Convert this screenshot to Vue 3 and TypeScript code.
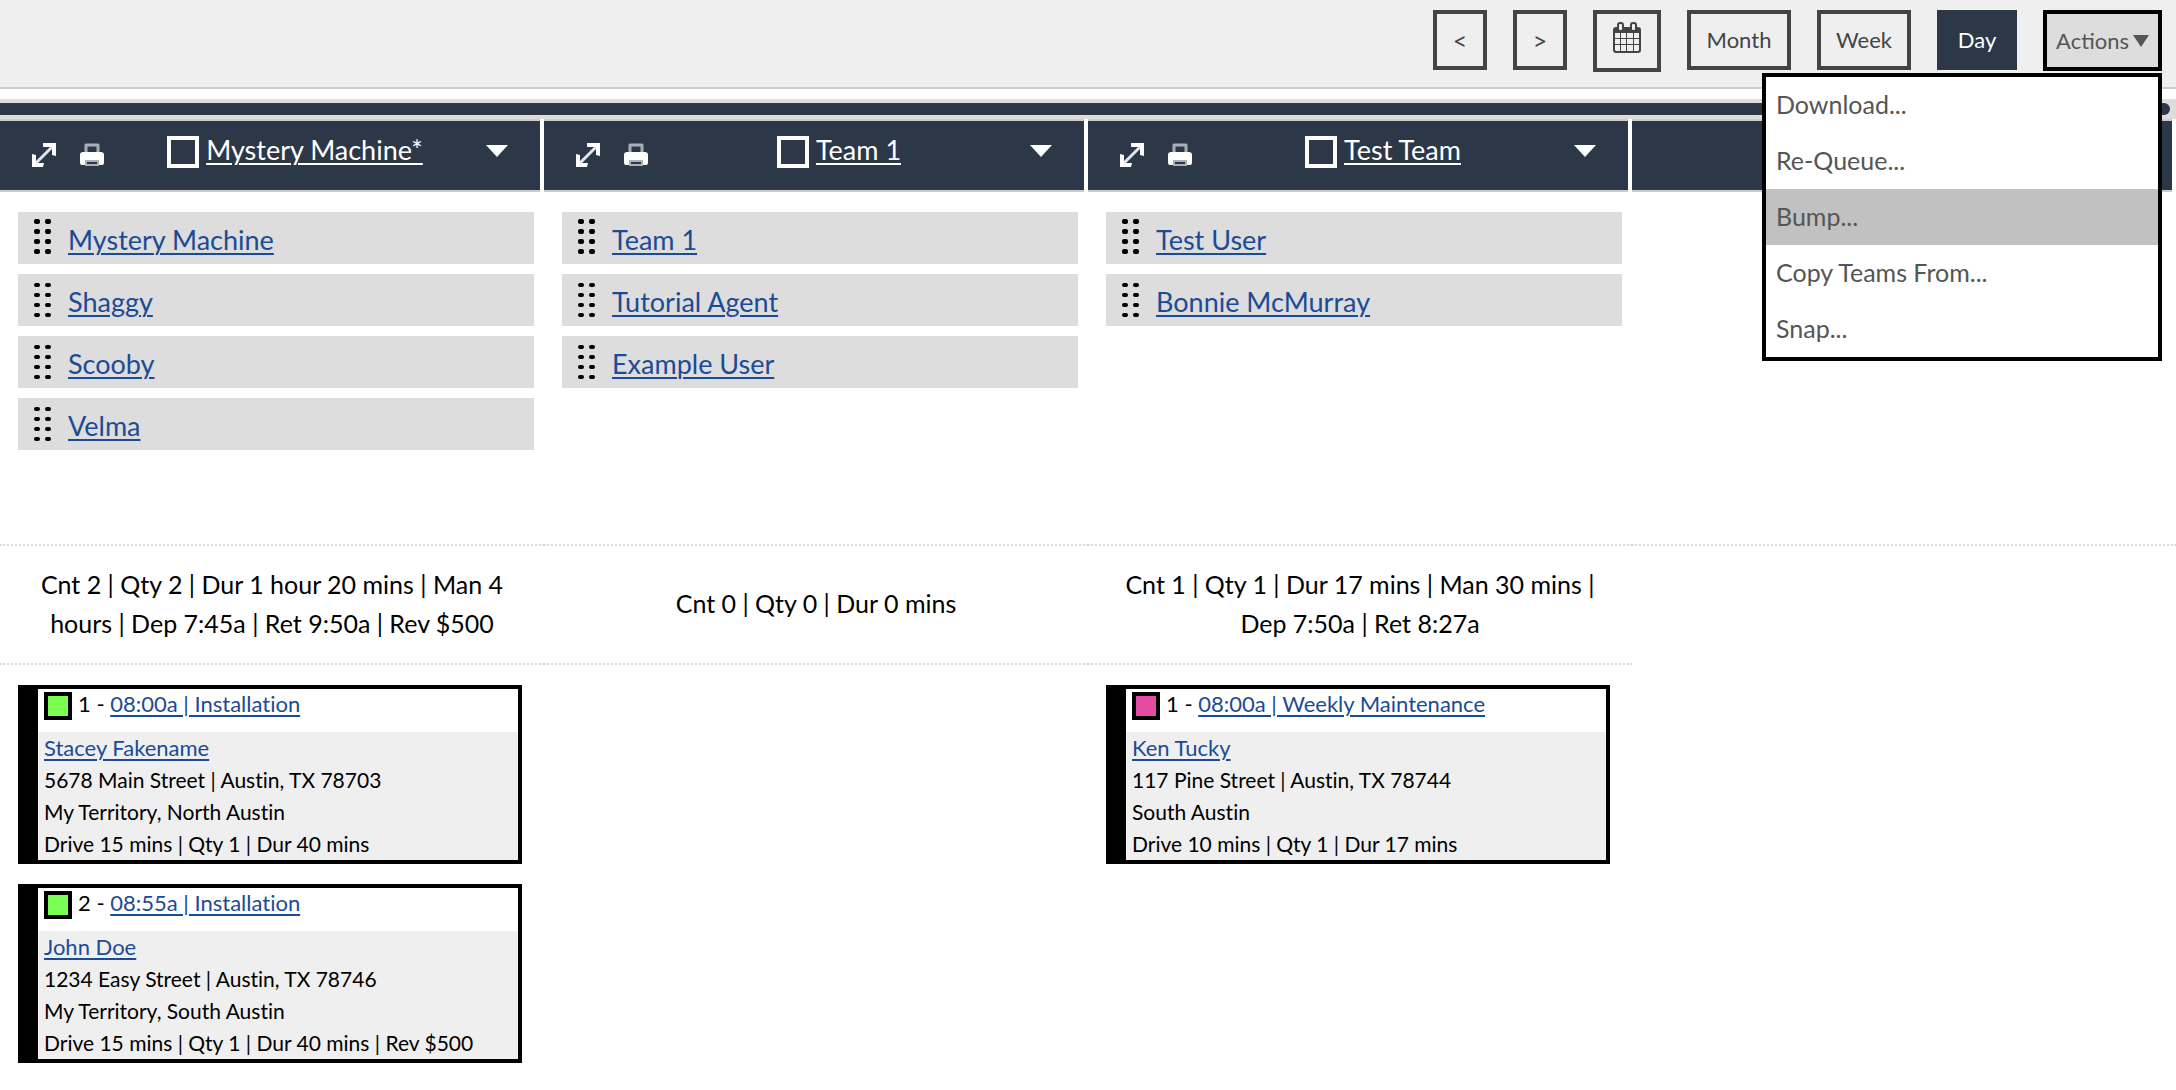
<script setup lang="ts">
import { ref } from 'vue'

interface Job {
  order: number
  color: string
  title: string
  customer: string
  lines: string[]
}

interface Team {
  id: string
  name: string
  members: string[]
  stats: string
  jobs: Job[]
}

const teams: Team[] = [
  {
    id: 'mystery',
    name: 'Mystery Machine*',
    members: ['Mystery Machine', 'Shaggy', 'Scooby', 'Velma'],
    stats: 'Cnt 2 | Qty 2 | Dur 1 hour 20 mins | Man 4 hours | Dep 7:45a | Ret 9:50a | Rev $500',
    jobs: [
      {
        order: 1,
        color: '#78ff52',
        title: '08:00a | Installation',
        customer: 'Stacey Fakename',
        lines: [
          '5678 Main Street | Austin, TX 78703',
          'My Territory, North Austin',
          'Drive 15 mins | Qty 1 | Dur 40 mins',
        ],
      },
      {
        order: 2,
        color: '#78ff52',
        title: '08:55a | Installation',
        customer: 'John Doe',
        lines: [
          '1234 Easy Street | Austin, TX 78746',
          'My Territory, South Austin',
          'Drive 15 mins | Qty 1 | Dur 40 mins | Rev $500',
        ],
      },
    ],
  },
  {
    id: 'team1',
    name: 'Team 1',
    members: ['Team 1', 'Tutorial Agent', 'Example User'],
    stats: 'Cnt 0 | Qty 0 | Dur 0 mins',
    jobs: [],
  },
  {
    id: 'test',
    name: 'Test Team',
    members: ['Test User', 'Bonnie McMurray'],
    stats: 'Cnt 1 | Qty 1 | Dur 17 mins | Man 30 mins | Dep 7:50a | Ret 8:27a',
    jobs: [
      {
        order: 1,
        color: '#e44ca4',
        title: '08:00a | Weekly Maintenance',
        customer: 'Ken Tucky',
        lines: [
          '117 Pine Street | Austin, TX 78744',
          'South Austin',
          'Drive 10 mins | Qty 1 | Dur 17 mins',
        ],
      },
    ],
  },
]

const actions = ['Download...', 'Re-Queue...', 'Bump...', 'Copy Teams From...', 'Snap...']
const highlighted = ref('Bump...')
const menuOpen = ref(true)
const view = ref('Day')
const dotRows = [0, 10, 20, 30]
</script>

<template>
  <div class="page">
    <header class="toolbar">
      <button class="btn square" type="button" aria-label="Previous day">&lt;</button>
      <button class="btn square" type="button" aria-label="Next day">&gt;</button>
      <button class="btn calendar" type="button" aria-label="Pick a date">
        <svg width="28" height="32" viewBox="0 0 28 32" aria-hidden="true">
          <path d="M3 5h22a3 3 0 0 1 3 3v20a3 3 0 0 1-3 3H3a3 3 0 0 1-3-3V8a3 3 0 0 1 3-3z" fill="#444" />
          <g fill="#efefef">
            <path d="M2 11h5v5H2zM8 11h5v5H8zM14 11h6v5h-6zM21 11h5v5h-5z" />
            <path d="M2 17h5v5H2zM8 17h5v5H8zM14 17h6v5h-6zM21 17h5v5h-5z" />
            <path d="M2 23h5v6H3l-1-1zM8 23h5v6H8zM14 23h6v6h-6zM21 23h5v5l-1 1h-4z" />
          </g>
          <rect x="5" y="1" width="5" height="8" rx="2" fill="#efefef" stroke="#444" stroke-width="2" />
          <rect x="18" y="1" width="5" height="8" rx="2" fill="#efefef" stroke="#444" stroke-width="2" />
        </svg>
      </button>
      <button class="btn month" type="button" @click="view = 'Month'">Month</button>
      <button class="btn week" type="button" @click="view = 'Week'">Week</button>
      <button class="btn day" type="button" :aria-pressed="view === 'Day'" @click="view = 'Day'">Day</button>
      <div class="actions">
        <button class="btn actions-btn" type="button" :aria-expanded="menuOpen" @click="menuOpen = !menuOpen">
          Actions
          <svg width="16" height="12" viewBox="0 0 16 12" aria-hidden="true"><path d="M0 0h16L8 12z" fill="#555" /></svg>
        </button>
        <ul v-if="menuOpen" class="menu">
          <li v-for="item in actions" :key="item">
            <button
              type="button"
              :class="['menu-item', { active: item === highlighted }]"
              @mouseenter="highlighted = item"
            >{{ item }}</button>
          </li>
        </ul>
      </div>
    </header>

    <div class="scroll-track"><div class="scroll-thumb"></div></div>

    <main class="board">
      <section v-for="team in teams" :key="team.id" class="column">
        <div class="column-head">
          <svg class="head-icon" width="24" height="24" viewBox="0 0 24 24" aria-hidden="true">
            <path d="M4 20L20 4" stroke="#e4e6e9" stroke-width="3" />
            <path d="M11 0h13v13l-4-1V4h-9zM0 11l4 1v8h8l-1 4H0z" fill="#fff" />
          </svg>
          <svg class="head-icon" width="24" height="24" viewBox="0 0 24 24" aria-hidden="true">
            <path d="M6 10V2h12v8" fill="none" stroke="#a9b0b8" stroke-width="3" stroke-linejoin="round" />
            <path d="M3 9h18a3 3 0 0 1 3 3v8a2 2 0 0 1-2 2h-3v-4H5v4H2a2 2 0 0 1-2-2v-8a3 3 0 0 1 3-3z" fill="#fff" />
            <path d="M6 18v4h12v-4z" fill="none" stroke="#a9b0b8" stroke-width="2" />
          </svg>
          <div class="head-title">
            <input :id="'pick-' + team.id" class="pick" type="checkbox" :aria-label="'Select ' + team.name" />
            <a href="#">{{ team.name }}</a>
          </div>
          <button class="head-toggle" type="button" :aria-label="'Options for ' + team.name">
            <svg width="22" height="12" viewBox="0 0 22 12" aria-hidden="true"><path d="M0 0h22L11 12z" fill="#fff" /></svg>
          </button>
        </div>

        <ul class="members">
          <li v-for="(member, index) in team.members" :key="member" class="member">
            <svg class="grip" width="18" height="36" viewBox="0 0 18 36" aria-hidden="true">
              <template v-for="y in dotRows" :key="y">
                <rect x="0" :y="index ? y + 2 : y" width="6" :height="index ? 4 : 5" rx="2" />
                <rect x="11" :y="index ? y + 2 : y" width="6" :height="index ? 4 : 5" rx="2" />
              </template>
            </svg>
            <a href="#">{{ member }}</a>
          </li>
        </ul>

        <p class="stats">{{ team.stats }}</p>

        <div class="jobs">
          <article v-for="job in team.jobs" :key="job.order" class="job">
            <div class="job-head">
              <span class="swatch" :style="{ backgroundColor: job.color }"></span>
              <span>{{ job.order }} - <a href="#">{{ job.title }}</a></span>
            </div>
            <div class="job-body">
              <a class="customer" href="#">{{ job.customer }}</a>
              <div v-for="line in job.lines" :key="line">{{ line }}</div>
            </div>
          </article>
        </div>
      </section>

      <section class="column">
        <div class="column-head"></div>
        <div class="members"></div>
      </section>
    </main>
  </div>
</template>

<style>
body {
  background: #fff;
}
</style>

<style scoped>
.page {
  font-family: Lato, "Liberation Sans", sans-serif;
  font-variant-ligatures: none;
  color: #000;
}

.page * {
  box-sizing: border-box;
}

a {
  color: #1b4b96;
  text-decoration: underline;
  text-decoration-thickness: 2px;
  text-underline-offset: 3px;
}

ul {
  list-style: none;
  margin: 0;
  padding: 0;
}

button {
  font-family: inherit;
  cursor: pointer;
}

.toolbar {
  display: flex;
  justify-content: flex-end;
  align-items: flex-start;
  gap: 26px;
  height: 89px;
  padding: 10px 14px 0;
  background: #efefef;
  border-bottom: 2px solid #ccc;
}

.btn {
  display: flex;
  align-items: center;
  justify-content: center;
  height: 60px;
  padding: 0;
  border: 4px solid #444;
  border-radius: 0;
  background: #efefef;
  color: #444;
  font-size: 22px;
  line-height: 28px;
}

.square {
  width: 54px;
  font-size: 25px;
}

.calendar {
  width: 68px;
  height: 62px;
  padding-bottom: 6px;
}

.month {
  width: 104px;
}

.week {
  width: 94px;
}

.day {
  width: 80px;
  border-color: #2c3848;
  background: #2c3848;
  color: #fff;
}

.actions {
  position: relative;
}

.actions-btn {
  gap: 4px;
  width: 119px;
  height: 61px;
  border-color: #000;
  background: #ddd;
  color: #555;
}

.menu {
  position: absolute;
  top: 63px;
  right: 0;
  z-index: 2;
  width: 400px;
  border: 4px solid #000;
  background: #fff;
}

.menu-item {
  display: block;
  width: 100%;
  height: 56px;
  padding: 0 10px 2px;
  border: 0;
  background: none;
  color: #555;
  font-size: 25px;
  text-align: left;
}

.menu-item.active {
  background: #c1c1c1;
}

.scroll-track {
  margin-top: 10px;
  padding: 4px 6px 4px 0;
  background: #ddd;
}

.scroll-thumb {
  height: 12px;
  border-radius: 0 6px 6px 0;
  background: #2c3848;
}

.board {
  display: grid;
  grid-template-columns: repeat(4, 1fr);
}

.column-head {
  display: flex;
  align-items: flex-start;
  height: 73px;
  margin-right: 4px;
  padding: 15px 32px 0;
  border-top: 2px solid #ccc;
  border-bottom: 2px solid #ccc;
  background: #2c3848;
}

.head-icon {
  flex: none;
  margin-top: 7px;
}

.head-icon + .head-icon {
  margin-left: 24px;
}

.head-title {
  display: flex;
  flex: 1;
  justify-content: center;
  gap: 7px;
  font-size: 27px;
  line-height: 28px;
}

.head-title a {
  color: #fff;
}

.pick {
  width: 32px;
  height: 32px;
  margin: 0;
  border: 4px solid #fff;
  appearance: none;
}

.pick:checked {
  background: #fff;
}

.head-toggle {
  display: flex;
  margin-top: 9px;
  padding: 0;
  border: 0;
  background: none;
}

.members {
  display: flex;
  flex-direction: column;
  gap: 10px;
  height: 354px;
  padding: 20px 10px 0 18px;
  border-bottom: 2px dotted #ddd;
}

.member {
  display: flex;
  align-items: center;
  gap: 16px;
  height: 52px;
  padding: 2px 16px 0;
  background: #ddd;
  font-size: 27px;
}

.grip {
  flex: none;
  margin-bottom: 4px;
}

.stats {
  display: flex;
  align-items: center;
  justify-content: center;
  min-height: 119px;
  margin: 0;
  padding: 0 30px 2px;
  border-bottom: 2px dotted #ddd;
  font-size: 25px;
  line-height: 39px;
  text-align: center;
}

.jobs {
  display: flex;
  flex-direction: column;
  gap: 20px;
  padding: 20px 22px 20px 18px;
}

.job {
  border: 4px solid #000;
  border-left-width: 20px;
  font-size: 21px;
  line-height: 32px;
}

.job-head {
  display: flex;
  gap: 6px;
  height: 43px;
  padding: 0 6px;
  font-size: 22px;
  line-height: 30px;
}

.swatch {
  width: 28px;
  height: 28px;
  margin-top: 3px;
  border: 4px solid #000;
}

.job-body {
  padding: 0 6px;
  background: #efefef;
}

.customer {
  display: block;
  font-size: 22px;
}
</style>
